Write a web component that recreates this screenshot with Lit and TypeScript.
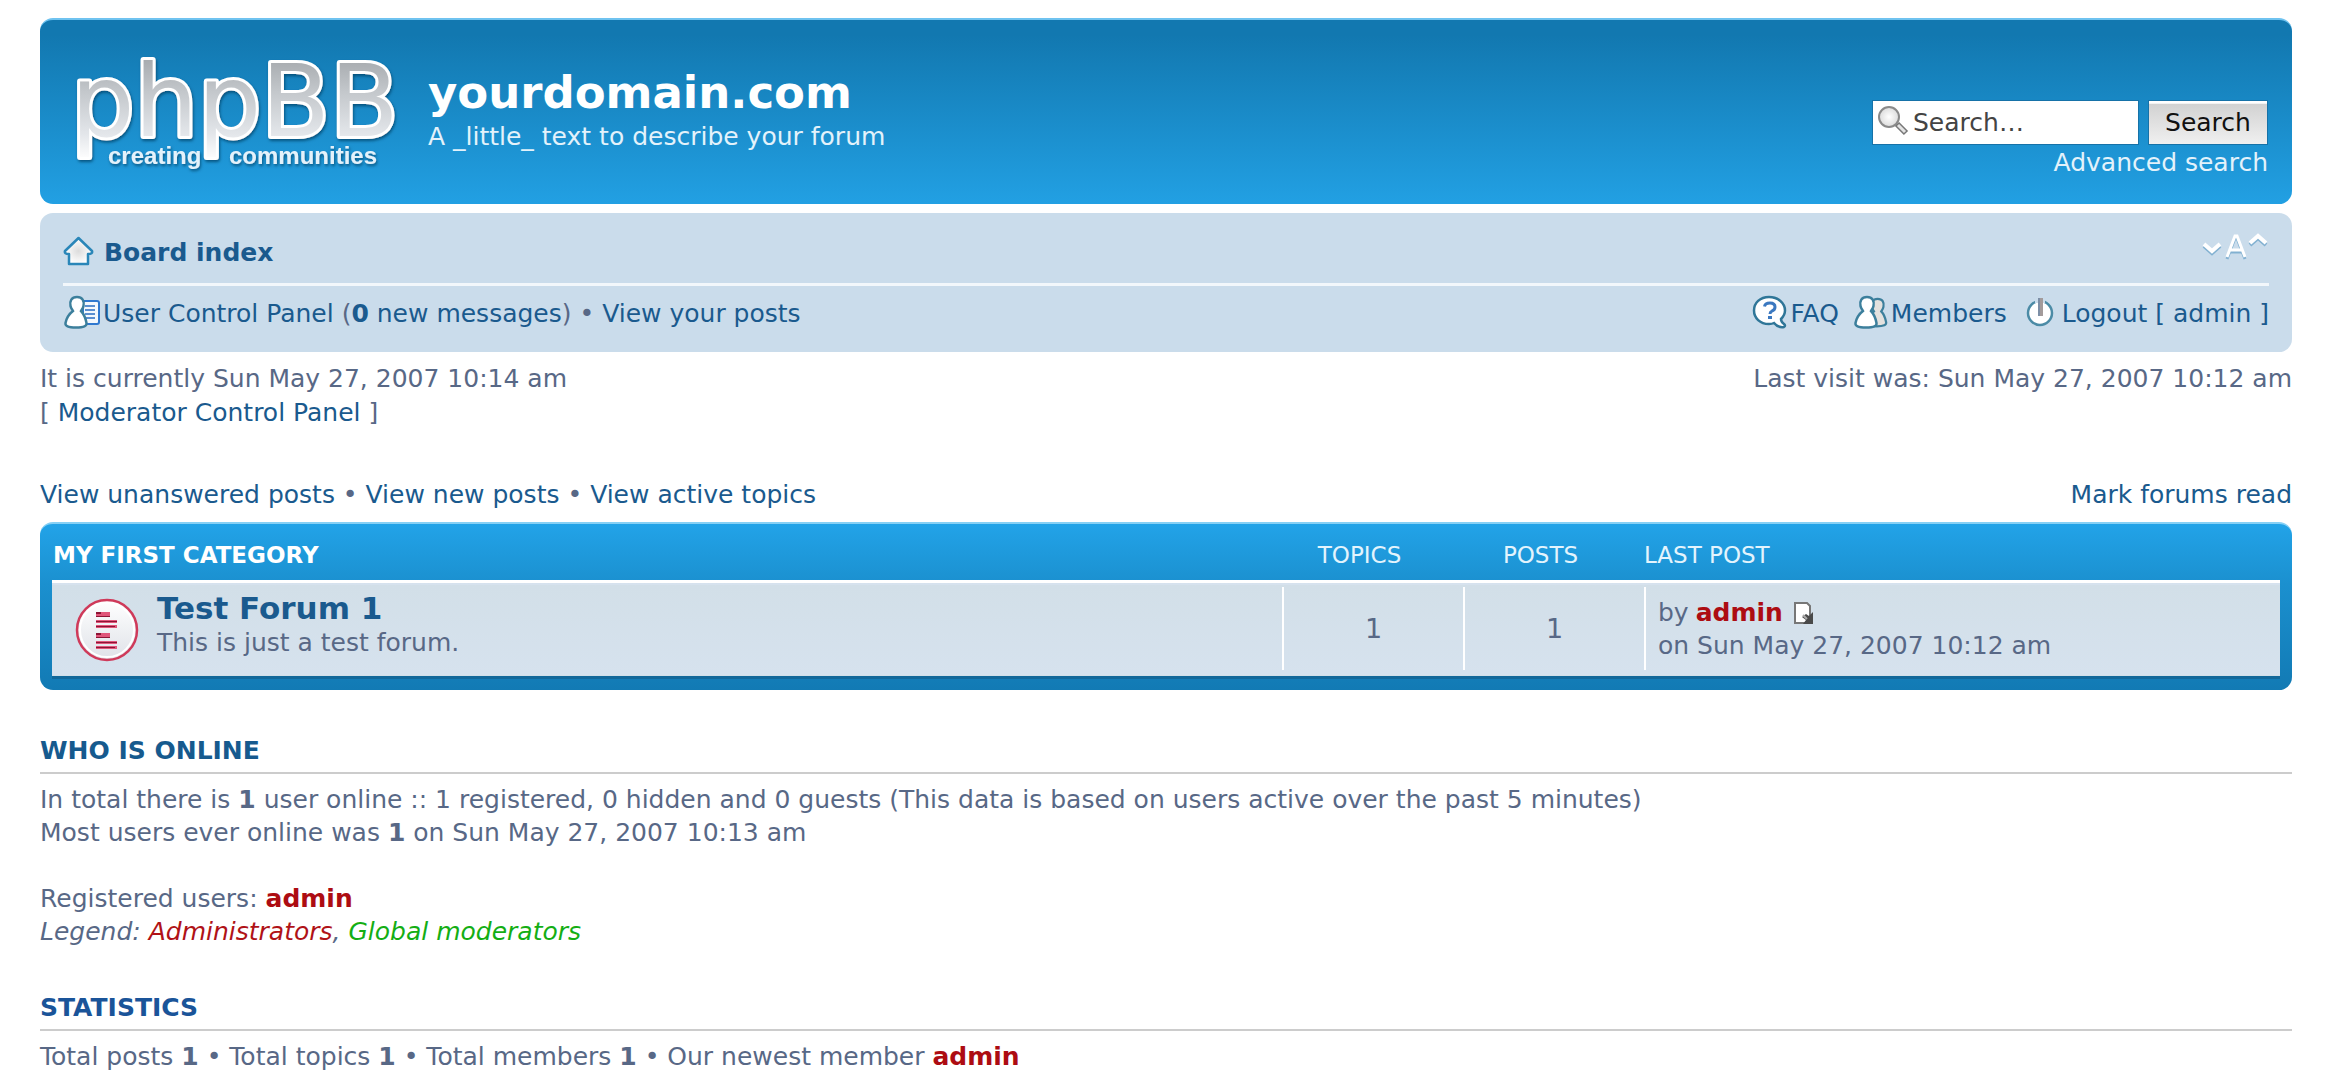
import { LitElement, html, css } from "lit";
import { customElement } from "lit/decorators.js";

const logo = html`<svg class="logo" width="330" height="122" viewBox="70 50 330 122" role="img" aria-label="phpBB creating communities">
  <defs>
    <linearGradient id="steel" gradientUnits="userSpaceOnUse" x1="0" y1="56" x2="0" y2="160">
      <stop offset="0" stop-color="#a4a8ac" />
      <stop offset=".35" stop-color="#c4c8cc" />
      <stop offset=".75" stop-color="#e3e6ea" />
      <stop offset="1" stop-color="#fff" />
    </linearGradient>
    <filter id="drop" x="-5%" y="-10%" width="110%" height="125%">
      <feDropShadow dx="1" dy="2" stdDeviation="1.5" flood-color="#06446c" flood-opacity=".8" />
    </filter>
  </defs>
  <g filter="url(#drop)">
    <text class="mark" x="71" y="136">phpBB</text>
    <text class="motto" x="108" y="164">creating</text>
    <text class="motto" x="229" y="164">communities</text>
  </g>
</svg>`;

const homeIcon = html`<svg class="icon" width="32" height="30" viewBox="0 0 32 30" aria-hidden="true">
  <defs><radialGradient id="roof"><stop offset="0" stop-color="#dcdcdc" /><stop offset="1" stop-color="#fff" /></radialGradient></defs>
  <path d="M15.500 2 L29 15 Q30 18 25 18 V28 H6 V18 Q1 18 2 15 Z" fill="url(#roof)" stroke="#2a86b8" stroke-width="2.500" stroke-linejoin="round" />
</svg>`;

const person = "M14 2 C8.500 2 6.500 6 7.500 11 C8 13.500 9.500 15 10 16 C6 19 3.500 23 2.500 28 C2 31 5 32.500 13 32.500 C21 32.500 24 31 23.500 28 C22.500 23 21 19 18 16 C18.500 15 20 13.500 20.500 11 C21.500 6 19.500 2 14 2 Z";

const panelIcon = html`<svg class="icon" width="38" height="34" viewBox="0 0 38 34" aria-hidden="true">
  <path d="M20 6 H34 Q36 6 36 8 V27 Q36 29 34 29 H20 Z" fill="#f4f8fc" stroke="#2f78cf" stroke-width="2" />
  <path d="M22 11 H32 M22 15 H32 M22 19 H32 M22 23 H32" stroke="#5b8fd0" stroke-width="2" />
  <path d=${person} fill="#fff" stroke="#3c7f9c" stroke-width="2.500" />
</svg>`;

const membersIcon = html`<svg class="icon" width="36" height="34" viewBox="0 0 36 34" aria-hidden="true">
  <g transform="translate(12 2) scale(.9)"><path d=${person} fill="#e3e1de" stroke="#3c7f9c" stroke-width="2.500" /></g>
  <path d=${person} fill="#fff" stroke="#3c7f9c" stroke-width="2.500" />
</svg>`;

const faqIcon = html`<svg class="icon" width="36" height="34" viewBox="0 0 36 34" aria-hidden="true">
  <path d="M17 2 C8 2 2 8 2 15.500 C2 23 8 29 17 29 Q20 29 22 28 Q26 33 32 32 Q34 31 32 29 Q29 27 29 24 Q33 20 33 15.500 C33 8 26 2 17 2 Z" fill="#fff" stroke="#2f7698" stroke-width="2.500" />
  <path d="M12.500 11.500 Q13 8 18 8 Q23 8 23 12 Q23 15 20 16 Q18 17 18 19" fill="none" stroke="#3b78c0" stroke-width="3" />
  <rect x="16" y="21" width="4" height="3" fill="#3b78c0" />
</svg>`;

const powerIcon = html`<svg class="icon" width="30" height="30" viewBox="0 0 30 30" aria-hidden="true">
  <circle cx="15" cy="16" r="12" fill="#fff" stroke="#4b8ba6" stroke-width="2.500" />
  <rect x="10" y="1" width="10" height="6" fill="#cadceb" />
  <path d="M11 6 H19 V17 H11 Z" fill="#fff" />
  <rect x="13" y="1" width="5" height="18" fill="#a39b9b" />
  <rect x="13" y="1" width="2" height="18" fill="#7d8fa6" />
</svg>`;

const sizeIcon = html`<svg width="68" height="32" viewBox="0 0 68 32" aria-hidden="true">
  <g fill="none" stroke-width="4" stroke="#82b1d1" transform="translate(0 2)">
    <path d="M3 14 L11 21 L19 14" /><path d="M26 27 L34 6 H36 L44 27 M29 20 H41" stroke-width="3" /><path d="M49 13 L57 6 L65 13" />
  </g>
  <g fill="none" stroke-width="4" stroke="#fff">
    <path d="M3 14 L11 21 L19 14" /><path d="M26 27 L34 6 H36 L44 27 M29 20 H41" stroke-width="3" /><path d="M49 13 L57 6 L65 13" />
  </g>
</svg>`;

const forumIcon = html`<svg class="forum-icon" width="64" height="64" viewBox="0 0 64 64" role="img" aria-label="Unread posts">
  <defs><linearGradient id="disc" x1="0" y1="0" x2="0" y2="1"><stop offset="0" stop-color="#fff" /><stop offset="1" stop-color="#dfe2e8" /></linearGradient></defs>
  <circle cx="32" cy="32" r="30" fill="url(#disc)" stroke="#cf3a5a" stroke-width="2.500" />
  <circle cx="32" cy="32" r="27" fill="none" stroke="#fff" stroke-width="2" />
  <g fill="#e0567a">
    <path d="M21 14 H35 V19 H21 Z M21 22 H42 V25 H21 Z M21 27 H42 V30 H21 Z" />
    <path d="M21 35 H35 V40 H21 Z M21 43 H42 V46 H21 Z M21 48 H42 V51 H21 Z" />
  </g>
  <g fill="#8c1535">
    <path d="M21 14 H26 V16 H21 Z M21 18 H35 V19 H21 Z M21 23 H42 V24 H21 Z M21 28 H40 V29 H21 Z" />
    <path d="M21 35 H26 V37 H21 Z M21 39 H35 V40 H21 Z M21 44 H42 V45 H21 Z M21 49 H40 V50 H21 Z" />
  </g>
</svg>`;

const latestIcon = html`<svg width="20" height="22" viewBox="0 0 20 22" aria-hidden="true">
  <path d="M1 1 H13 L16 4 V21 H1 Z" fill="#fff" stroke="#777" stroke-width="2" />
  <path d="M19 10 V22 H9 L12 18 L8 15 L12 12 L15 14 Z" fill="#4a4a4a" />
  <path d="M9 13 L13 17" stroke="#aaa" stroke-width="2" />
</svg>`;

const searchIcon = html`<svg class="search-icon" width="32" height="32" viewBox="0 0 32 32" aria-hidden="true">
  <defs><radialGradient id="lens"><stop offset="0" stop-color="#fff" /><stop offset="1" stop-color="#dcdcdc" /></radialGradient></defs>
  <circle cx="12" cy="12" r="10" fill="url(#lens)" stroke="#8a8a8a" stroke-width="2" />
  <path d="M20 19 L29 28" stroke="#777" stroke-width="6" />
  <path d="M21 20 L28 27" stroke="#e4e4e4" stroke-width="3" />
</svg>`;

@customElement("app-root")
export class AppRoot extends LitElement {
  static styles = css`
    :host { display: block; }
    * { box-sizing: border-box; }
    .page { padding: 18px 42px 0 40px; font-family: "DejaVu Sans", Verdana, sans-serif; font-size: 25px; line-height: 34px; color: #586886; background: #fff; }
    a { color: #1a5a8e; text-decoration: none; }
    h1, h2, h3, p { margin: 0; }
    svg { display: block; flex: none; overflow: visible; }
    .row { display: flex; justify-content: space-between; }

    .header { display: flex; align-items: flex-start; gap: 28px; min-height: 186px; padding: 30px 24px 0 30px; border-radius: 13px; color: #fff; background: linear-gradient(#1278b0 8%, #22a0e3); border-top: 2px solid #6fc3f0; }
    .mark { font-family: "DejaVu Sans", sans-serif; font-size: 100px; fill: url(#steel); stroke: #fff; stroke-width: 6px; stroke-linejoin: round; paint-order: stroke; }
    .motto { font: bold 24px "Liberation Sans", Arial, sans-serif; fill: #e4f2fb; }
    .brand { flex: 1; padding-top: 16px; }
    .brand h1 { font-size: 45px; line-height: 54px; }
    .tagline { color: #e3f2fb; }
    .search { display: flex; flex-direction: column; align-items: flex-end; padding-top: 50px; }
    .search-line { display: flex; gap: 9px; padding-bottom: 1px; }
    .field { display: flex; align-items: center; width: 267px; height: 45px; padding: 0 4px 4px; background: #fff; border: 1px solid #1672a8; }
    .field input { flex: 1; min-width: 0; padding: 4px 0 0 4px; border: 0; outline: 0; background: none; font: inherit; color: #333; }
    .field input::placeholder { color: #444; opacity: 1; }
    .search button { width: 120px; height: 45px; padding: 0; border: 1px solid #1672a8; font: inherit; color: #111; background: linear-gradient(#fff 5%, #d2d2d2 8%, #f0f0f0); }
    .search a { color: #e3f2fb; }

    .nav { margin-top: 9px; padding: 0 23px 21px; border-radius: 13px; background: #cadceb; }
    .crumbs { padding: 15px 0 13px; border-bottom: 3px solid #f2f7fb; }
    .crumb { display: flex; align-items: center; gap: 9px; padding-top: 8px; font-weight: bold; }
    .icon { margin-top: -4px; }
    .sizer { height: 34px; padding: 2px 0 0; border: 0; background: none; }
    .links { padding-top: 11px; }
    .with-icon { display: flex; align-items: center; gap: 2px; }
    .group { display: flex; gap: 14px; }
    .group .power { gap: 7px; margin-left: 4px; }

    .status { margin-top: 10px; }
    .quick { margin: 48px 0 10px; }

    .forum { padding: 14px 12px 11px; border-radius: 13px; border-top: 2px solid #86d0f5; background: linear-gradient(#22a3e8, #1b90cf 36%, #127ab4); }
    table { width: 100%; border-collapse: collapse; table-layout: fixed; }
    th { padding: 0 26px 8px 0; font-size: 23px; font-weight: normal; color: #e3f4fd; text-align: center; text-transform: uppercase; }
    .name { padding-left: 1px; text-align: left; font-weight: bold; color: #fff; }
    .last { text-align: left; }
    .count { width: 181px; }
    .latest { width: 636px; }
    tbody tr { background: linear-gradient(#d2dfe8, #d6e2ee); border-top: 3px solid #fff; border-bottom: 3px solid #12689a; }
    td { padding: 4px 0 6px; vertical-align: top; }
    .title-cell { display: flex; gap: 18px; padding-left: 23px; }
    .forum-icon { margin-top: 11px; }
    .forum-name { display: block; padding-top: 3px; font-size: 31px; line-height: 36px; font-weight: bold; }
    .cell { height: 83px; border-left: 2px solid #fff; }
    .number { font-size: 27px; line-height: 83px; text-align: center; }
    .post { padding: 9px 0 0 12px; line-height: 33px; }
    .post-by { display: flex; align-items: center; gap: 7px; }
    .post-by .admin { margin-right: 4px; }
    .admin { font-weight: bold; color: #ad0c12; }

    h3 { margin-top: 44px; padding-bottom: 4px; border-bottom: 2px solid #ccc; font-size: 25px; text-transform: uppercase; color: #165a8e; }
    .stats-title { color: #1a5499; }
    .info { margin-top: 9px; line-height: 33px; }
    .people { margin-top: 33px; line-height: 33px; }
    .people + h3 { margin-top: 43px; }
    .admins { color: #b01217; }
    .mods { color: #14ae14; }
  `;

  render() {
    return html`<div class="page">
      <header class="header">
        <a href="#">${logo}</a>
        <div class="brand">
          <h1>yourdomain.com</h1>
          <p class="tagline">A _little_ text to describe your forum</p>
        </div>
        <form class="search" @submit=${(e: Event) => e.preventDefault()}>
          <div class="search-line">
            <label class="field">${searchIcon}<input type="text" aria-label="Search" placeholder="Search…" /></label>
            <button type="submit">Search</button>
          </div>
          <a href="#">Advanced search</a>
        </form>
      </header>

      <nav class="nav">
        <div class="row crumbs">
          <a class="crumb" href="#">${homeIcon}<span>Board index</span></a>
          <button class="sizer" type="button" aria-label="Change font size">${sizeIcon}</button>
        </div>
        <div class="row links">
          <div class="with-icon">${panelIcon}<span><a href="#">User Control Panel</a> (<a href="#"><b>0</b> new messages</a>) • <a href="#">View your posts</a></span></div>
          <div class="group">
            <a class="with-icon" href="#">${faqIcon}<span>FAQ</span></a>
            <a class="with-icon" href="#">${membersIcon}<span>Members</span></a>
            <a class="with-icon power" href="#">${powerIcon}<span>Logout [ admin ]</span></a>
          </div>
        </div>
      </nav>

      <div class="row status">
        <p>It is currently Sun May 27, 2007 10:14 am<br />[ <a href="#">Moderator Control Panel</a> ]</p>
        <p>Last visit was: Sun May 27, 2007 10:12 am</p>
      </div>
      <div class="row quick">
        <p><a href="#">View unanswered posts</a> • <a href="#">View new posts</a> • <a href="#">View active topics</a></p>
        <a href="#">Mark forums read</a>
      </div>

      <div class="forum">
        <table>
          <colgroup><col /><col class="count" /><col class="count" /><col class="latest" /></colgroup>
          <thead>
            <tr><th class="name">My first category</th><th>Topics</th><th>Posts</th><th class="last">Last post</th></tr>
          </thead>
          <tbody>
            <tr>
              <td><div class="title-cell">${forumIcon}<div><a class="forum-name" href="#">Test Forum 1</a><p>This is just a test forum.</p></div></div></td>
              <td><div class="cell number">1</div></td>
              <td><div class="cell number">1</div></td>
              <td><div class="cell post">
                <div class="post-by">by <a class="admin" href="#">admin</a><a href="#" aria-label="View the latest post">${latestIcon}</a></div>
                <div>on Sun May 27, 2007 10:12 am</div>
              </div></td>
            </tr>
          </tbody>
        </table>
      </div>

      <h3>Who is online</h3>
      <p class="info">In total there is <b>1</b> user online :: 1 registered, 0 hidden and 0 guests (This data is based on users active over the past 5 minutes)<br />Most users ever online was <b>1</b> on Sun May 27, 2007 10:13 am</p>
      <p class="people">Registered users: <a class="admin" href="#">admin</a><br /><em>Legend: <a class="admins" href="#">Administrators</a>, <a class="mods" href="#">Global moderators</a></em></p>

      <h3 class="stats-title">Statistics</h3>
      <p class="info">Total posts <b>1</b> • Total topics <b>1</b> • Total members <b>1</b> • Our newest member <a class="admin" href="#">admin</a></p>
    </div>`;
  }
}
